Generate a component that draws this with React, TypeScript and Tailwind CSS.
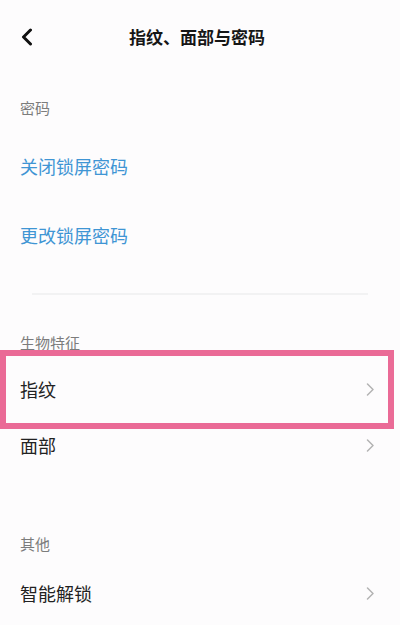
import React from 'react';

const Chevron: React.FC = () => (
  <svg width="9" height="13" viewBox="0 0 9 13" fill="none" stroke="#b3b3b3" strokeWidth={1.5} strokeLinecap="round" strokeLinejoin="round">
    <path d="M1.5 1 L7 6.5 L1.5 12" />
  </svg>
);

const Label: React.FC<{ text: string; h: string }> = ({ text, h }) => (
  <div className={`flex items-end px-5 ${h}`}>
    <span className="text-[15px] leading-[15px] text-[#7c7c7c]">{text}</span>
  </div>
);

const App: React.FC = () => {
  return (
    <div
      className="w-[400px] h-[625px] overflow-hidden bg-[#fdfcfd] flex flex-col"
      style={{ fontFamily: '"Noto Sans CJK SC", "Noto Sans", sans-serif' }}
    >
      {/* Header */}
      <div className="h-[74px] shrink-0 flex items-center relative">
        <div className="pl-[20px] flex items-center">
          <svg width="14" height="18" viewBox="0 0 14 18" fill="none" stroke="#111" strokeWidth={3} strokeLinecap="round" strokeLinejoin="round">
            <path d="M10.5 2 L3.5 9 L10.5 16" />
          </svg>
        </div>
        <div className="flex-1 flex justify-center pr-[40px]">
          <span className="text-[17px] font-bold text-[#161616]">指纹、面部与密码</span>
        </div>
      </div>

      {/* Password section */}
      <div className="h-[68px] shrink-0 flex items-center px-5">
        <span className="text-[15px] text-[#7c7c7c]">密码</span>
      </div>
      <div className="h-[48px] shrink-0 flex items-center px-5">
        <span className="text-[18px] text-[#3f95d4]">关闭锁屏密码</span>
      </div>
      <div className="h-[90px] shrink-0 flex items-center px-5">
        <span className="text-[18px] text-[#3f95d4]">更改锁屏密码</span>
      </div>
      <div className="mt-[13px] mx-[32px] h-[2px] shrink-0 bg-[#f2f2f3]" />

      {/* Biometrics */}
      <Label text="生物特征" h="h-[55px] shrink-0" />
      <div className="shrink-0 mr-[6px] h-[79px] border-[6px] border-[#ea6a96] flex items-center justify-between pl-[14px] pr-[13px]">
        <span className="text-[18px] text-[#222]">指纹</span>
        <Chevron />
      </div>
      <div className="h-[32px] shrink-0 flex items-center justify-between pl-5 pr-[25px]">
        <span className="text-[18px] text-[#222]">面部</span>
        <Chevron />
      </div>

      {/* Other */}
      <Label text="其他" h="h-[90px] shrink-0" />
      <div className="h-[84px] shrink-0 flex items-center justify-between pl-5 pr-[25px]">
        <span className="text-[18px] text-[#222]">智能解锁</span>
        <Chevron />
      </div>
    </div>
  );
};

export default App;
